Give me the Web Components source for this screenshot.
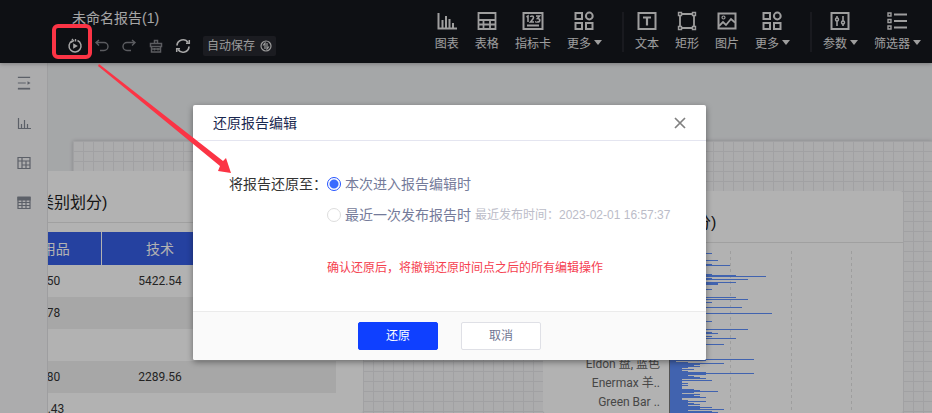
<!DOCTYPE html>
<html lang="zh-CN">
<head>
<meta charset="utf-8">
<title>未命名报告(1)</title>
<style>
    html, body {
        margin: 0;
        height: 100%;
        overflow: hidden;
        font: 14px/20px "Liberation Sans", "Noto Sans CJK SC", sans-serif;
    }
</style>
</head>
<body>
<report-app></report-app>

<script>
// all icons are drawn on their own grid, stroke follows the text color
const icons = {
    history: ['0 0 16 16', '<path d="M5 2.800A6 6 0 1 0 10.500 2.500" stroke-width="1.500"/><path d="M5 1l1.500 1.800L4 4.500M8.500 1v2.500" stroke-width="1.400"/><path d="M6.200 5.200v5.600l4.600-2.800z" fill="currentColor" stroke="none"/>'],
    undo: ['0 0 16 16', '<path d="M5 2L2 4.500l3 3M2 4.500h8a4 4 0 0 1 0 8H6" stroke-width="1.400"/>'],
    redo: ['0 0 16 16', '<path d="M11 2l3 2.500-3 3M14 4.500H6a4 4 0 0 0 0 8h4" stroke-width="1.400"/>'],
    brush: ['0 0 16 16', '<path d="M6.500 5V2.500h3V5M2.500 5.500h11v3h-11zM3.500 8.500v5.500h9V8.500M3 11h10M6.500 10v2.500M10 10v2.500" stroke-width="1.500"/>'],
    refresh: ['0 0 16 16', '<path d="M2 7.500a6 6 0 0 1 11-3M14 8.500a6 6 0 0 1-11 3" stroke-width="1.700"/><path d="M14.300 2v3.300h-3.300M1.700 14v-3.300h3.300" stroke-width="1.500"/>'],
    swap: ['0 0 12 12', '<circle cx="6" cy="6" r="5"/><path d="M5 9V3L3 5.500M7 3v6l2-2.500"/>'],
    chart: ['0 0 20 20', '<path d="M1.500 2v15.500H20M5.500 9v8M9 5v12M12.500 8v9M16 12v5" stroke-width="2"/>'],
    table: ['0 0 20 20', '<path d="M1.500 2h17v16h-17zM1 9h18M1 13.500h18M6.500 9v9M13 9v9" stroke-width="1.800"/>'],
    card: ['0 0 22 20', '<path d="M1.500 2h19v16h-19zM5 14.500h12" stroke-width="2"/><path d="M4.500 6L6 5v6M8.500 6q0-1 1.500-1t1.500 1.500q0 1-3 4.500h3.500M14 5h3.500l-2 2.500q2.300 0 2.300 1.700T15.500 11 14 10.500" stroke-width="1.600"/>'],
    more: ['0 0 20 20', '<path d="M1.500 2h6.500v6h-6.500zM1.500 12h6.500v6h-6.500zM12 12h6.500v6H12z" stroke-width="2"/><circle cx="15.300" cy="5" r="3.400" stroke-width="2"/>'],
    text: ['0 0 20 20', '<path d="M1.500 2h17v16h-17z" stroke-width="2"/><path d="M6 6.500h8M10 6.500V14.500" stroke-width="2.200"/>'],
    rect: ['0 0 20 20', '<path d="M5 3h10M5 17h10M3 5v10M17 5v10" stroke-width="1.800"/><path d="M1.500 1.500h3v3h-3zM15.500 1.500h3v3h-3zM1.500 15.500h3v3h-3zM15.500 15.500h3v3h-3z" stroke-width="1.400"/>'],
    image: ['0 0 20 20', '<path d="M1.500 2.500h17v15h-17z" stroke-width="2"/><circle cx="6.500" cy="6.500" r="1.500"/><path d="M2 15l4-4 3 3 5-6 4 3.500" stroke-width="1.800"/>'],
    param: ['0 0 20 20', '<path d="M1.500 2h17v16h-17z" stroke-width="2"/><path d="M7 5v2M7 10v5M13 5v5M13 13v2" stroke-width="1.600"/><circle cx="7" cy="8.500" r="1.500" stroke-width="1.500"/><circle cx="13" cy="11.500" r="1.500" stroke-width="1.500"/>'],
    filter: ['0 0 20 20', '<path d="M1 2h3v3H1zM1 8.500h3v3H1zM1 15h3v3H1z" stroke-width="1.400"/><path d="M7 3.500h13M7 10h13M7 16.500h13" stroke-width="2"/>'],
    menu: ['0 0 16 16', '<path d="M1 1.500h14M1 8h9" stroke-width="1.300"/><path d="M1 14.500h14" stroke-width="2"/><path d="M12 6l3.500 2-3.500 2z" fill="currentColor" stroke="none"/>'],
    sideChart: ['0 0 14 14', '<path d="M1.500 2v10.500H14M4.500 8v4M7.500 4v8M10.500 8v4" />'],
    sidePivot: ['0 0 14 14', '<path d="M1 1.500h12v11H1zM1 5h12M5 1.500v11M5 9h8M9 5v7.500"/>'],
    sideTable: ['0 0 14 14', '<path d="M1 1.500h12v11H1zM1 6.500h12M1 9.500h12M5 4v8.500M9 4v8.500"/><path d="M1 1h12v3H1z" fill="currentColor"/>'],
    close: ['0 0 12 12', '<path d="M1 1l10 10M11 1L1 11" stroke-width="1.700"/>']
}

// [row, units]; rows up to 131 are sparse, after that every row has a bar
const bars = [
    [23, 7], [30, 8], [34, 7], [35, 10], [44, 7], [45, 11], [46, 16], [48, 7], [49, 13],
    [52, 11], [53, 8], [54, 8], [59, 7], [67, 11], [69, 13], [72, 7], [77, 12], [83, 17],
    [91, 7], [99, 13], [102, 7], [103, 8], [106, 7], [108, 11], [114, 9], [129, 14], [130, 6], [131, 1]
]
const denseBars = [
    3, 9, 5, 4, 5, 3, 2, 4, 2, 3, 6, 14, 6, 3, 4, 5, 6, 2, 7, 2, 2, 3, 2, 3, 2, 2, 2,
    4, 5, 8, 4, 2, 5, 4, 5, 6, 2, 2, 3, 6, 3, 4, 5, 3, 5, 7, 5, 9, 3, 7, 8
]
denseBars.forEach((units, i) => bars.push([132 + i, units]))


class Base extends HTMLElement {
    constructor() {
        super()
        this.attachShadow({ mode: 'open' })
    }
    connectedCallback() {
        this.shadowRoot.innerHTML = this.render()
    }
}


class AppIcon extends Base {
    render() {
        const [box, shapes] = icons[this.getAttribute('name')]
        return `<style>
            :host { display: inline-flex; width: 16px; height: 16px; flex: none; }
            svg { width: 100%; height: 100%; fill: none; stroke: currentColor; stroke-width: 1.200; }
        </style>
        <svg viewBox="${box}" aria-hidden="true">${shapes}</svg>`
    }
}


class ToolItem extends Base {
    render() {
        const caret = this.hasAttribute('caret') ? '<i></i>' : ''
        return `<style>
            :host { display: block; }
            button {
                display: flex; flex-direction: column; align-items: center; gap: 4px;
                padding: 0; border: 0; background: none; color: #e2e2e2;
                font: inherit; font-size: 12px; line-height: 18px; white-space: nowrap; cursor: pointer;
            }
            app-icon { width: 20px; height: 20px; }
            app-icon[name=card] { width: 22px; }
            span { display: flex; align-items: center; gap: 3px; }
            i { border: 4px solid transparent; border-top: 5px solid; border-bottom: 0; margin-bottom: 3px; }
        </style>
        <button type="button"><app-icon name="${this.getAttribute('icon')}"></app-icon><span><slot></slot>${caret}</span></button>`
    }
}


class ReportHeader extends Base {
    render() {
        return `<style>
            :host {
                display: flex; justify-content: space-between; align-items: center; box-sizing: border-box;
                height: 63px; padding: 0 11px 0 67px; background: #15171e; color: #eee;
                box-shadow: 0 1px 4px #0004; position: relative;
            }
            h1 { margin: 0 0 8px 5px; font: inherit; }
            .actions, .tools, .group { display: flex; align-items: center; }
            .actions { gap: 11px; }
            .actions button { display: flex; padding: 0; border: 0; background: none; color: #eee; font: inherit; }
            .actions button:disabled { color: #83858a; }
            .actions .save {
                align-items: center; gap: 5px; margin-left: 1px; padding: 0 4px; line-height: 20px;
                background: #272930; color: #ddd; font-size: 12px; border-radius: 2px;
            }
            .save app-icon { width: 12px; height: 12px; }
            .group { gap: 16px; padding-left: 11px; }
            .group + .group { border-left: 2px solid #24262d; margin-left: 20px; height: 40px; }
        </style>
        <div>
            <h1>未命名报告(1)</h1>
            <div class="actions">
                <button type="button" aria-label="还原"><app-icon name="history"></app-icon></button>
                <button type="button" aria-label="撤销" disabled><app-icon name="undo"></app-icon></button>
                <button type="button" aria-label="重做" disabled><app-icon name="redo"></app-icon></button>
                <button type="button" aria-label="清空" disabled><app-icon name="brush"></app-icon></button>
                <button type="button" aria-label="刷新"><app-icon name="refresh"></app-icon></button>
                <button type="button" class="save">自动保存<app-icon name="swap"></app-icon></button>
            </div>
        </div>
        <nav class="tools">
            <div class="group">
                <tool-item icon="chart">图表</tool-item>
                <tool-item icon="table">表格</tool-item>
                <tool-item icon="card">指标卡</tool-item>
                <tool-item icon="more" caret>更多</tool-item>
            </div>
            <div class="group">
                <tool-item icon="text">文本</tool-item>
                <tool-item icon="rect">矩形</tool-item>
                <tool-item icon="image">图片</tool-item>
                <tool-item icon="more" caret>更多</tool-item>
            </div>
            <div class="group">
                <tool-item icon="param" caret>参数</tool-item>
                <tool-item icon="filter" caret>筛选器</tool-item>
            </div>
        </nav>`
    }
}


class SideBar extends Base {
    render() {
        return `<style>
            :host { display: block; width: 47px; flex: none; background: #f6f6f8; border-right: 1px solid #e2e2e5; }
            button {
                display: flex; align-items: center; justify-content: center; width: 100%; height: 40px;
                padding: 0; border: 0; background: none; color: #858a96;
            }
            button:first-child {
                height: 41px; margin-bottom: 1px; background: #fff; border-bottom: 1px solid #e5e5e8; color: #777d8a;
            }
            app-icon { width: 14px; height: 14px; }
            button:first-child app-icon { width: 16px; height: 16px; }
        </style>
        <button type="button" aria-label="展开"><app-icon name="menu"></app-icon></button>
        <button type="button" aria-label="图表"><app-icon name="sideChart"></app-icon></button>
        <button type="button" aria-label="交叉表"><app-icon name="sidePivot"></app-icon></button>
        <button type="button" aria-label="明细表"><app-icon name="sideTable"></app-icon></button>`
    }
}


class ReportCard extends Base {
    render() {
        return `<style>
            :host { display: block; background: #fff; border-radius: 3px; }
            h2 {
                margin: 0; padding: 22px 0 9px var(--title-indent, 16px); border-bottom: 1px solid #e6e6e6;
                font: inherit; font-size: 16px; color: #222; white-space: nowrap;
            }
        </style>
        <h2>${this.getAttribute('heading')}</h2>
        <slot></slot>`
    }
}


class PivotTable extends Base {
    render() {
        const rows = [['50', '5422.54'], ['78', ''], ['', ''], ['80', '2289.56'], ['.43', '']]
        return `<style>
            :host { display: block; padding: 9px 27px 0; }
            table { width: 100%; border-collapse: collapse; table-layout: fixed; color: #333; }
            th { height: 33px; padding: 0; background: #365ee5; color: #fff; font: inherit; }
            th + th { border-left: 1px solid #fff; }
            td { height: 32px; padding: 0; font: 12px/20px Roboto, sans-serif; text-align: center; }
            tr:nth-child(even) td { background: #f0f0f0; }
            th:first-child { text-align: right; padding-right: 31px; }
            td:first-child { text-align: right; padding-right: 41px; }
            tr:last-child td:first-child { padding-right: 37px; }
        </style>
        <table>
            <thead><tr><th>用品</th><th>技术</th><th></th></tr></thead>
            <tbody>${rows.map(([a, b]) => `<tr><td>${a}</td><td>${b}</td><td></td></tr>`).join('')}</tbody>
        </table>`
    }
}


class BarChart extends Base {
    render() {
        // plot starts 13px below the row origin
        const path = bars.map(([row, units]) => `M1 ${row - 13}h${units * 6}v1H1z`).join('')
        return `<style>
            :host { display: flex; gap: 9px; }
            ul {
                margin: 0; padding: 112px 0 0; width: 117px; list-style: none; text-align: right;
                font: 12px/19px Roboto, "Noto Sans CJK SC", sans-serif; color: #666; white-space: nowrap;
            }
            svg { flex: 1; height: 190px; shape-rendering: crispEdges; }
        </style>
        <ul><li>Eldon 盘, 蓝色</li><li>Enermax 羊..</li><li>Green Bar ..</li></ul>
        <svg role="img" aria-label="柱状图">
            <path d="M61.500 8v182M122.500 8v182M182.500 8v182" stroke="#e2e2e2" stroke-dasharray="3 3"/>
            <path d="M0.500 8v182" stroke="#777"/>
            <path d="${path}" fill="#5d8ffb"/>
        </svg>`
    }
}


class ReportCanvas extends Base {
    render() {
        return `<style>
            :host {
                display: flex; position: relative; flex: 1; min-width: 0; overflow: hidden;
                box-sizing: border-box; padding: 78px 0 0 25px; background: #edeff1;
            }
            .sheet {
                flex: 1; box-shadow: 0 0 4px #0003; background: #f6f6f8;
                background-image: linear-gradient(#e7e7ea 1px, transparent 1px), linear-gradient(90deg, #e7e7ea 1px, transparent 1px);
                background-size: 10px 10px;
            }
            /* widgets sit freely on the canvas */
            report-card { position: absolute; bottom: 0; }
            .pivot { left: -91px; top: 108px; width: 406px; --title-indent: 81px; }
            .bars { left: 495px; top: 128px; width: 360px; --title-indent: 152px; }
        </style>
        <div class="sheet"></div>
        <report-card class="pivot" heading="类别划分)"><pivot-table></pivot-table></report-card>
        <report-card class="bars" heading="分)"><bar-chart></bar-chart></report-card>`
    }
}


class ModalDialog extends Base {
    render() {
        return `<style>
            :host { display: flex; justify-content: center; align-items: flex-start; background: #0000004d; }
            section { width: 513px; background: #fff; border-radius: 2px; box-shadow: 0 2px 6px #0006; overflow: hidden; }
            header {
                display: flex; justify-content: space-between; align-items: center; height: 35px;
                padding: 0 20px; border-bottom: 1px solid #e4e5f0; color: #1a2850;
            }
            h2 { margin: 0; font: inherit; }
            header button { display: flex; padding: 0; border: 0; background: none; color: #808080; }
            app-icon { width: 12px; height: 12px; }
            footer {
                display: flex; justify-content: center; gap: 23px; padding: 10px 0;
                background: #fafafa; border-top: 1px solid #ebebeb;
            }
        </style>
        <section role="dialog" aria-labelledby="title">
            <header>
                <h2 id="title">${this.getAttribute('heading')}</h2>
                <button type="button" aria-label="关闭"><app-icon name="close"></app-icon></button>
            </header>
            <slot></slot>
            <footer><slot name="footer"></slot></footer>
        </section>`
    }
}


class UiButton extends Base {
    render() {
        return `<style>
            :host { display: block; }
            button {
                display: block; width: 80px; height: 28px; padding: 0; border: 1px solid #dfe0e6; border-radius: 2px;
                background: #fff; color: #6f7592; font: inherit; font-size: 12px; cursor: pointer;
            }
            :host([primary]) button { background: #0f40ff; border-color: #0f40ff; color: #fff; }
        </style>
        <button type="button"><slot></slot></button>`
    }
}


class RestoreForm extends Base {
    render() {
        return `<style>
            :host { display: block; padding: 33px 36px; color: #333; }
            form { display: grid; grid-template-columns: 98px 1fr; row-gap: 11px; }
            #group-label { white-space: nowrap; }
            .option { display: flex; align-items: center; gap: 4px; grid-column: 2; color: #757b9a; white-space: nowrap; }
            input {
                appearance: none; width: 14px; height: 14px; margin: 0; flex: none;
                border: 1px solid #ddd; border-radius: 50%; background: #fff;
            }
            input:checked {
                border-color: #2453ff;
                background: radial-gradient(circle, #3a6bff 4px, #fff 5px);
            }
            small { font-size: 12px; color: #bbbcc8; }
            p { margin: 0; padding-top: 22px; grid-column: 2; font-size: 12px; color: #f5404f; white-space: nowrap; }
        </style>
        <form role="radiogroup" aria-labelledby="group-label">
            <span id="group-label">将报告还原至：</span>
            <div class="option">
                <input type="radio" name="point" id="enter" checked>
                <label for="enter">本次进入报告编辑时</label>
            </div>
            <div class="option">
                <input type="radio" name="point" id="publish">
                <label for="publish">最近一次发布报告时</label>
                <small>最近发布时间：2023-02-01 16:57:37</small>
            </div>
            <p>确认还原后，将撤销还原时间点之后的所有编辑操作</p>
        </form>`
    }
}


// the red frame round the restore button and the arrow to the form
class GuideMark extends Base {
    render() {
        return `<style>
            :host { display: block; pointer-events: none; }
            svg { display: block; width: 240px; height: 180px; }
        </style>
        <svg viewBox="0 0 240 180" aria-hidden="true">
            <rect x="54" y="26" width="36" height="31" rx="4" fill="none" stroke="#fb3445" stroke-width="4"/>
            <path d="M99 64L223 161L226 158L231 173L218 171L220 166L98 66z" fill="#fb3445"/>
        </svg>`
    }
}


class ReportApp extends Base {
    render() {
        return `<style>
            :host { display: flex; flex-direction: column; height: 100vh; position: relative; overflow: hidden; }
            report-header { flex: none; z-index: 1; }
            main { display: flex; flex: 1; min-height: 0; }
            /* overlays */
            modal-dialog { position: absolute; inset: 0; z-index: 2; padding: 105px 33px 0 0; }
            guide-mark { position: absolute; left: 0; top: 0; z-index: 3; }
        </style>
        <report-header></report-header>
        <main><side-bar></side-bar><report-canvas></report-canvas></main>
        <modal-dialog heading="还原报告编辑">
            <restore-form></restore-form>
            <ui-button slot="footer" primary>还原</ui-button>
            <ui-button slot="footer">取消</ui-button>
        </modal-dialog>
        <guide-mark></guide-mark>`
    }
}

customElements.define('app-icon', AppIcon)
customElements.define('tool-item', ToolItem)
customElements.define('report-header', ReportHeader)
customElements.define('side-bar', SideBar)
customElements.define('report-card', ReportCard)
customElements.define('pivot-table', PivotTable)
customElements.define('bar-chart', BarChart)
customElements.define('report-canvas', ReportCanvas)
customElements.define('modal-dialog', ModalDialog)
customElements.define('ui-button', UiButton)
customElements.define('restore-form', RestoreForm)
customElements.define('guide-mark', GuideMark)
customElements.define('report-app', ReportApp)
</script>
</body>
</html>
